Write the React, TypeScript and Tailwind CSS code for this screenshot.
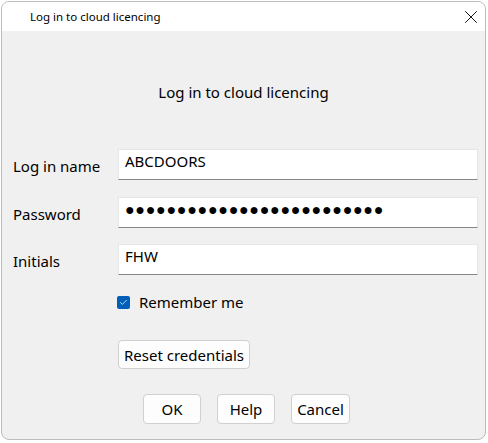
import { Check, X } from "lucide-react";

const font = { fontFamily: '"Noto Sans", "Open Sans", sans-serif' };

function Field({ label, value, mt, dots }: { label: string; value: string; mt: string; dots?: boolean }) {
  return (
    <div className={`flex items-center ${mt}`}>
      <span className="w-[116px] shrink-0 pl-[11px] pt-[2px] text-[15px] leading-[20px]">{label}</span>
      <div
        className={`h-[31px] w-[360px] border border-[#e6e6e6] border-b-[#868686] bg-white pl-[6px] ${
          dots ? "pt-px text-[16px] leading-[20px] tracking-[0.7px]" : "pt-px text-[15px] leading-[20px]"
        }`}
      >
        {value}
      </div>
    </div>
  );
}

function Btn({ children, className = "" }: { children: React.ReactNode; className?: string }) {
  return (
    <button
      className={`rounded-[4px] border border-[#d0d0d0] bg-[#fdfdfd] text-[15px] leading-[20px] text-black ${className}`}
    >
      {children}
    </button>
  );
}

export default function App() {
  return (
    <div className="h-[443px] w-[488px] bg-white pl-px pt-px text-black" style={font}>
      <div className="flex h-[439px] w-[485px] flex-col overflow-hidden rounded-[8px] border border-[#bcbcbc] bg-[#f0f0f0]">
        <div className="flex h-[29px] shrink-0 items-center justify-between bg-white pl-[28px] pr-[3px]">
          <span className="text-[11.5px] leading-[16px]">Log in to cloud licencing</span>
          <X size={22} strokeWidth={1} className="text-black" />
        </div>

        <div className="flex flex-1 flex-col">
          <h1 className="mt-[51px] text-center text-[15px] leading-[20px]">Log in to cloud licencing</h1>

          <Field label="Log in name" value="ABCDOORS" mt="mt-[47px]" />
          <Field label="Password" value={"\u25CF".repeat(25)} mt="mt-[17px]" dots />
          <Field label="Initials" value="FHW" mt="mt-[16px]" />

          <label className="ml-[115px] mt-[17px] flex items-center gap-[9px]">
            <span className="flex h-[13px] w-[13px] items-center justify-center rounded-[2px] bg-[#005fb8]">
              <Check size={9} strokeWidth={2} className="text-white" />
            </span>
            <span className="text-[15px] leading-[20px]">Remember me</span>
          </label>

          <div className="ml-[116px] mt-[28px] flex">
            <Btn className="h-[29px] w-[132px]">Reset credentials</Btn>
          </div>

          <div className="ml-[141px] mt-[25px] flex gap-[16px]">
            <Btn className="h-[30px] w-[58px]">OK</Btn>
            <Btn className="h-[30px] w-[58px]">Help</Btn>
            <Btn className="h-[30px] w-[59px]">Cancel</Btn>
          </div>
        </div>
      </div>
    </div>
  );
}
